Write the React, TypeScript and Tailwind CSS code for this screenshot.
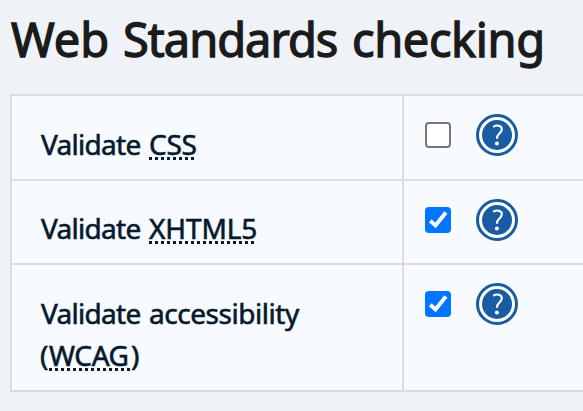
import type { ReactNode } from "react";

function Abbr({ children, className = "" }: { children: ReactNode; className?: string }) {
  return (
    <abbr
      className={`inline-block h-[42px] bg-[repeating-linear-gradient(90deg,#0b1c30_0_3px,transparent_3px_6px)] bg-[length:100%_3px] bg-no-repeat bg-[position:0_34px] no-underline ${className}`}
    >
      {children}
    </abbr>
  );
}

function Checkbox({ checked = false }: { checked?: boolean }) {
  return (
    <span
      role="checkbox"
      aria-checked={checked}
      className={`block size-[26px] shrink-0 rounded-[4px] ${checked ? "bg-[#0075ff]" : "border-2 border-[#767676] bg-white"}`}
    >
      {checked && (
        <svg viewBox="0 0 26 26" className="size-[26px]" fill="none" stroke="#fff" strokeWidth="4">
          <path d="M5.3 13.7 10.5 18.4 20.9 5.6" />
        </svg>
      )}
    </span>
  );
}

function Help() {
  return (
    <svg viewBox="0 0 42 42" className="size-[42px] shrink-0" role="img" aria-label="Help">
      <circle cx="21" cy="21" r="19.5" fill="#fff" stroke="#195ca3" strokeWidth="3" />
      <circle cx="21" cy="21" r="15" fill="#195ca3" />
      <path d="M17.2 12.8c1.6-1 3.2-1.4 4.8-1.2 2.5.2 3.8 1.6 3.8 3.7 0 2.1-1.1 3.1-2.6 4.4-1.8 1.5-2.3 2.5-2.2 5.1" fill="none" stroke="#fff" strokeWidth="2.1" />
      <circle cx="20.9" cy="29.4" r="2" fill="#fff" />
    </svg>
  );
}

function Row({ height, pad, checked, children }: { height: string; pad: string; checked?: boolean; children: ReactNode }) {
  return (
    <div className={`flex border-b-2 border-[#dcdcdc] ${height}`}>
      <div className={`w-[392px] shrink-0 border-r-2 border-[#dcdcdc] pl-[28px] ${pad}`}>{children}</div>
      <div className="flex items-start pt-[18px] pl-[21px]">
        <div className="pt-2 pr-[25px]">
          <Checkbox checked={checked} />
        </div>
        <Help />
      </div>
    </div>
  );
}

export default function App() {
  return (
    <main className="h-[411px] w-[583px] overflow-hidden bg-[#eff3f8] pl-[10px] font-['Noto_Sans',sans-serif] whitespace-nowrap">
      <h1 className="flex h-[94px] pt-[7px] text-[47px] leading-[64px] font-normal text-[#1b1b1b] [-webkit-text-stroke:1.3px_#1b1b1b]">
        <span className="w-[113px] pl-px">Web </span>
        <span className="w-[229px] tracking-[-1px]">Standards </span>
        <span className="tracking-[-0.4px]">checking</span>
      </h1>
      <section className="w-[600px] border-t-2 border-l-2 border-[#dcdcdc] bg-[#f7fbff] text-[28px] leading-[42px] text-[#061a2e] [-webkit-text-stroke:0.6px_#061a2e]">
        <Row height="h-[85px]" pad="pt-[27px]">
          <div className="flex">
            <span className="w-[109px] pl-px tracking-[-0.7px]">Validate</span>
            <Abbr className="w-[47px] tracking-[-0.3px]">CSS</Abbr>
          </div>
        </Row>
        <Row height="h-[84px]" pad="pt-[26px]" checked>
          <div className="flex">
            <span className="w-[109px] pl-px tracking-[-0.7px]">Validate</span>
            <Abbr className="w-[107px] tracking-[-0.1px]">XHTML5</Abbr>
          </div>
        </Row>
        <Row height="h-[127px]" pad="pt-[27px]" checked>
          <div className="flex">
            <span className="w-[109px] pl-px tracking-[-0.7px]">Validate</span>
            <span className="tracking-[-0.45px]">accessibility</span>
          </div>
          <div className="flex">
            <span className="w-[9px]">(</span>
            <Abbr className="w-[82px] tracking-[-0.4px]">WCAG</Abbr>
            <span>)</span>
          </div>
        </Row>
      </section>
    </main>
  );
}
